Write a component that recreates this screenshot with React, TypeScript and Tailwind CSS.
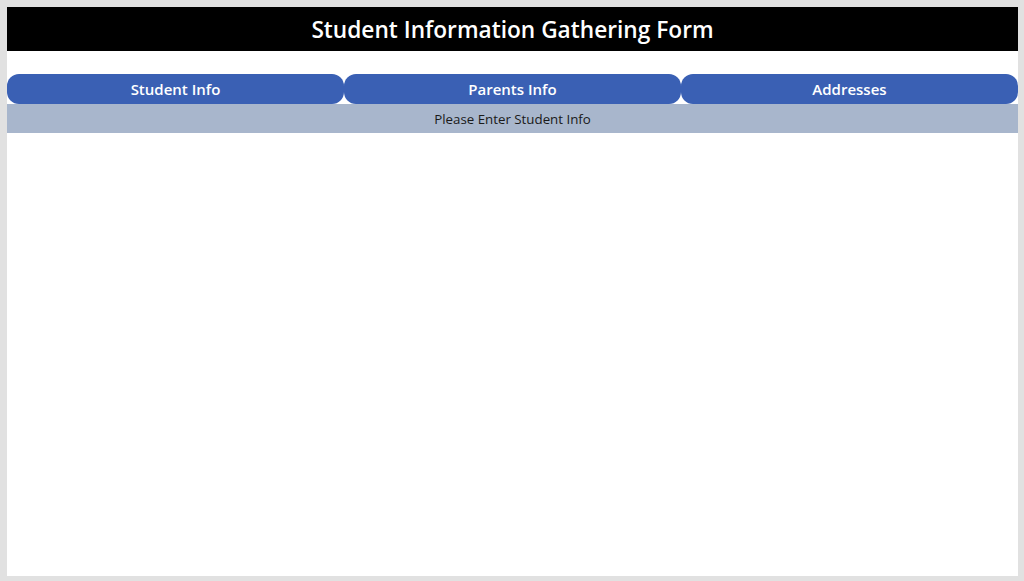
export default function App() {
  const tabs = ["Student Info", "Parents Info", "Addresses"];
  return (
    <div className="h-[581px] w-[1024px] bg-[#e1e1e1] pt-[7px] pl-[7px] pr-[6px] pb-[5px] font-['Open_Sans',sans-serif]">
      <div className="flex h-full flex-col bg-white">
        <div className="flex h-[44px] items-center justify-center bg-black pt-[2px] text-[22.7px] font-semibold text-white">
          Student Information Gathering Form
        </div>
        <div className="mt-[23px] grid grid-cols-3">
          {tabs.map((t) => (
            <button key={t} className="h-[30px] rounded-[12px] bg-[#3a60b4] text-[15px] font-semibold text-white">
              {t}
            </button>
          ))}
        </div>
        <div className="flex h-[29px] items-center justify-center bg-[#a8b6cc] pt-[2px] text-[13.3px] text-[#1a1a1a]">
          Please Enter Student Info
        </div>
      </div>
    </div>
  );
}
